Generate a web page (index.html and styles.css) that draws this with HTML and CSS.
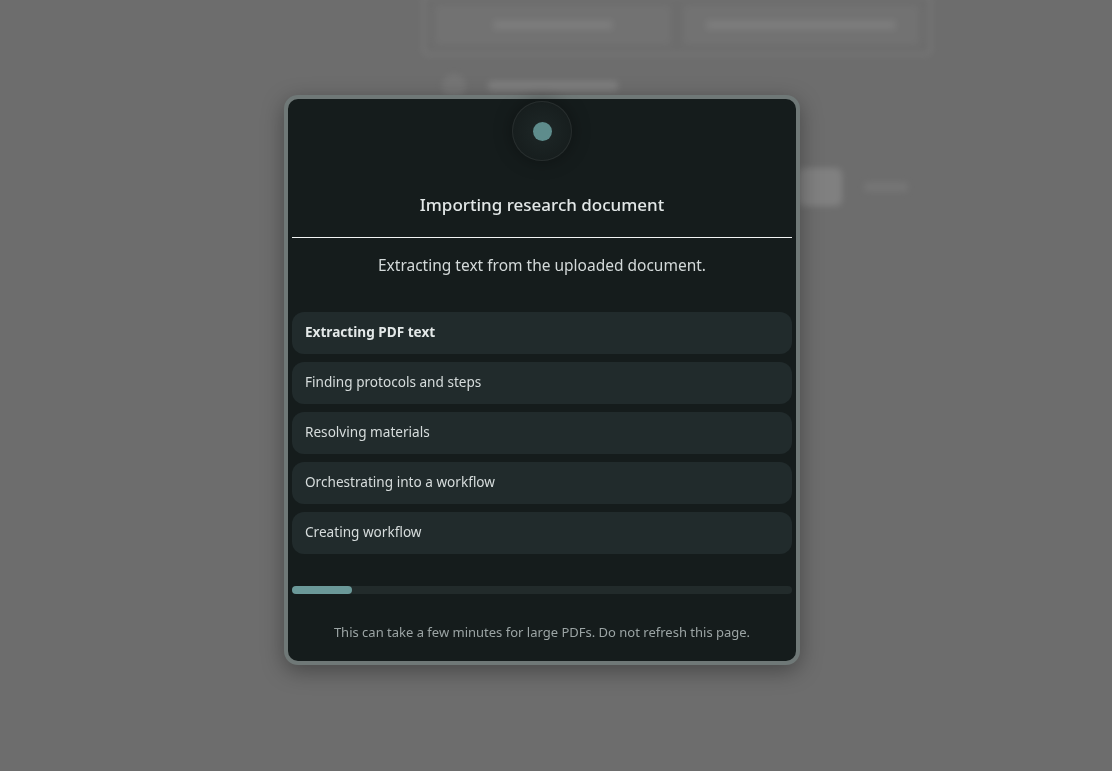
FILE: index.html
```html
<!DOCTYPE html>
<html lang="en">
<head>
  <meta charset="UTF-8">
  <title>Importing research document</title>
  <link rel="stylesheet" href="styles.css">
</head>
<body>

<div class="page">
  <div class="upload-card">
    <div class="pill pill-main"><span class="pill-text"></span></div>
    <div class="pill pill-file"><span class="pill-text"></span></div>
  </div>
  <div class="page-row">
    <span class="dot"></span>
    <span class="line line-wide"></span>
  </div>
  <div class="page-row actions">
    <span class="btn-ghost"></span>
    <span class="line line-short"></span>
  </div>
</div>

<div class="overlay">
  <div class="modal">
    <div class="spinner"><span class="spinner-dot"></span></div>

    <h2 class="modal-title">Importing research document</h2>
    <hr class="divider">
    <p class="modal-sub">Extracting text from the uploaded document.</p>

    <ul class="steps">
      <li class="step active">Extracting PDF text</li>
      <li class="step">Finding protocols and steps</li>
      <li class="step">Resolving materials</li>
      <li class="step">Orchestrating into a workflow</li>
      <li class="step">Creating workflow</li>
    </ul>

    <div class="progress"><div class="progress-fill" style="width: 12%"></div></div>

    <p class="modal-note">This can take a few minutes for large PDFs. Do not refresh this page.</p>
  </div>
</div>

</body>
</html>
```

FILE: styles.css
```css
html, body {
  margin: 0;
  height: 100%;
}
body {
  font-family: 'Noto Sans', 'Open Sans', sans-serif;
  background-color: #6d6d6d;
  overflow: hidden;
}

/* blurred page behind the dialog */
.page {
  padding-left: 422px;
  filter: blur(3px);
  opacity: 0.35;
}
.upload-card {
  width: 484px;
  height: 40px;
  margin-top: -6px;
  border: 3px solid #8a8a8a;
  border-radius: 6px;
  display: flex;
  gap: 12px;
  padding: 8px 10px;
  box-sizing: content-box;
}
.pill {
  flex: 1;
  border-radius: 4px;
  background: #7c7c7c;
  display: flex;
  align-items: center;
  justify-content: center;
}
.pill-text {
  width: 120px;
  height: 10px;
  border-radius: 3px;
  background: #999;
}
.pill-file .pill-text { width: 190px; }
.page-row {
  display: flex;
  align-items: center;
  gap: 22px;
  margin-top: 18px;
  padding-left: 20px;
}
.dot {
  width: 24px;
  height: 24px;
  border-radius: 50%;
  background: #858585;
}
.line {
  height: 10px;
  border-radius: 4px;
  background: #a0a0a0;
}
.line-wide { width: 130px; }
.line-short { width: 44px; background: #858585; }
.actions {
  margin-top: 70px;
  padding-left: 376px;
}
.btn-ghost {
  width: 44px;
  height: 38px;
  border-radius: 6px;
  background: #a5a5a5;
}

/* dialog */
.overlay {
  position: fixed;
  inset: 0;
  padding: 95px 0 0 284px;
}
.modal {
  width: 500px;
  box-sizing: content-box;
  padding: 4px;
  background: #151c1c;
  border: 4px solid #6f7877;
  border-radius: 14px;
  box-shadow: 0 6px 22px rgba(0,0,0,0.35);
  color: #dde3e3;
  text-align: center;
}
.spinner {
  width: 60px;
  height: 60px;
  margin: -2px auto 0;
  border-radius: 50%;
  border: 1px solid rgba(255,255,255,0.07);
  background: radial-gradient(circle, #1e2727 0%, #171e1e 70%);
  box-shadow: 0 0 18px rgba(0,0,0,0.35);
  display: flex;
  align-items: center;
  justify-content: center;
  box-sizing: border-box;
}
.spinner-dot {
  width: 19px;
  height: 19px;
  border-radius: 50%;
  background: #5e8c8c;
}
.modal-title {
  margin: 32px 0 0;
  font-size: 17px;
  font-weight: 500;
  line-height: 24px;
  color: #e2e7e7;
}
.divider {
  margin: 20px 0 0;
  border: none;
  border-top: 1px solid #f2f4f4;
}
.modal-sub {
  margin: 16px 0 0;
  font-size: 15.5px;
  line-height: 22px;
  color: #d3d9d9;
}
.steps {
  list-style: none;
  margin: 36px 0 0;
  padding: 0;
  display: flex;
  flex-direction: column;
  gap: 8px;
  text-align: left;
}
.step {
  height: 42px;
  line-height: 40px;
  padding: 0 13px;
  background: #212b2c;
  border-radius: 12px;
  font-size: 13.6px;
  color: #d6dcdc;
}
.step.active {
  font-weight: 700;
  color: #e3e8e8;
}
.progress {
  margin-top: 32px;
  height: 8px;
  border-radius: 4px;
  background: #222b2b;
}
.progress-fill {
  height: 100%;
  border-radius: 4px;
  background: #6b9999;
}
.modal-note {
  margin: 29px 0 16px;
  font-size: 13px;
  line-height: 18px;
  color: #9ba4a4;
}
```
